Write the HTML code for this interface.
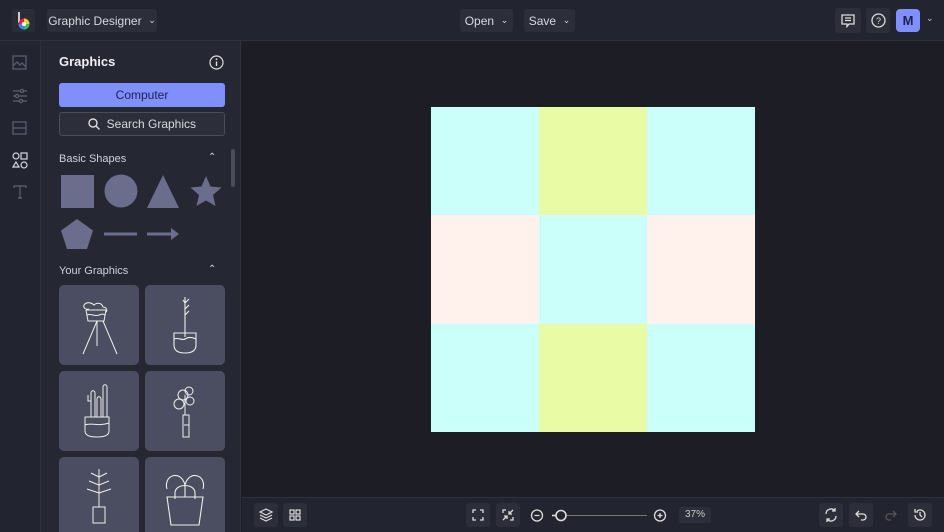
<!DOCTYPE html>
<html><head><meta charset="utf-8"><style>
*{margin:0;padding:0;box-sizing:border-box}
html,body{width:944px;height:532px;overflow:hidden}
body{background:#1c1d25;font-family:"Liberation Sans",sans-serif;position:relative;color:#e6e7ee}
.abs{position:absolute}
.top{left:0;top:0;width:944px;height:41px;background:#22242f;border-bottom:1px solid #2f313c}
.btn{position:absolute;background:#2c2e3a;border-radius:3px;color:#d8d9e0;font-size:12px;display:flex;align-items:center;justify-content:center;white-space:nowrap}
.rail{left:0;top:41px;width:41px;height:491px;background:#22242f;border-right:1px solid #2f313c}
.panel{left:41px;top:41px;width:200px;height:491px;background:#252733;border-right:1px solid #2f313c}
.bottom{left:242px;top:497px;width:702px;height:35px;background:#22242f;border-top:1px solid #2f313c}
.card{position:absolute;width:80px;height:80px;background:#4b4e60;border-radius:5px}
.sh{fill:#6b6d8c}
.ib{position:absolute;width:24px;height:24px;background:#2c2e3a;border-radius:3px}
</style></head><body>
<div class="abs top"></div>
<div class="btn" style="left:12px;top:9px;width:23px;height:23px;background:#2a2c37">
<svg width="18" height="20" viewBox="0 0 18 20"><line x1="4" y1="1" x2="4" y2="12" stroke="#fff" stroke-width="1.5"/><circle cx="9" cy="13" r="5.5" fill="#e24"/><path d="M9 13 L9 7.5 A5.5 5.5 0 0 1 14.5 13Z" fill="#fc3"/><path d="M9 13 L14.5 13 A5.5 5.5 0 0 1 9 18.5Z" fill="#3b6"/><path d="M9 13 L9 18.5 A5.5 5.5 0 0 1 3.5 13Z" fill="#38e"/><circle cx="9" cy="13" r="2" fill="#fff"/></svg></div>
<div class="btn" style="left:47px;top:9px;width:110px;height:23px">Graphic Designer&nbsp;&nbsp;<span style="font-size:9px">⌄</span></div>
<div class="btn" style="left:460px;top:9px;width:53px;height:23px">Open&nbsp;&nbsp;<span style="font-size:9px">⌄</span></div>
<div class="btn" style="left:524px;top:9px;width:51px;height:23px">Save&nbsp;&nbsp;<span style="font-size:9px">⌄</span></div>
<div class="btn" style="left:835px;top:8px;width:26px;height:25px"><svg width="14" height="14" viewBox="0 0 14 14" fill="none" stroke="#ddd" stroke-width="1.3"><path d="M1 1h12v9H8l-2 2.5V10H1z"/><path d="M4 4h6M4 6.5h6"/></svg></div>
<div class="btn" style="left:866px;top:8px;width:24px;height:25px"><svg width="15" height="15"><circle cx="7.5" cy="7.5" r="6.5" fill="none" stroke="#ddd" stroke-width="1.3"/><text x="7.5" y="11" font-size="9" fill="#ddd" text-anchor="middle" font-family="Liberation Sans">?</text></svg></div>
<div class="btn" style="left:896px;top:9px;width:24px;height:23px;background:#7f8ffb;color:#1d2150;font-weight:bold;font-size:13px;border-radius:4px">M</div>
<div class="abs" style="left:926px;top:13px;font-size:9px;color:#ccc">⌄</div>

<div class="abs rail"></div>
<svg class="abs" style="left:12px;top:55px" width="16" height="145" fill="none" stroke="#5f6175" stroke-width="1.2">
<rect x="1" y="1" width="13" height="13"/><path d="M1 11l4-4 3 3 2-2 4 4"/>
<path d="M1 36h14M1 41h14M1 46h14"/><circle cx="10" cy="36" r="1.6" fill="#22242f"/><circle cx="5" cy="41" r="1.6" fill="#22242f"/><circle cx="9" cy="46" r="1.6" fill="#22242f"/>
<rect x="1" y="67" width="13" height="12"/><path d="M1 73h13"/>
<g stroke="#d8d9e0"><circle cx="4" cy="101" r="3"/><rect x="9" y="98" width="6" height="6"/><path d="M4 107l3 5H1z"/><circle cx="12" cy="110" r="3"/></g>
<path d="M2 133v-2h12v2M8 131v12M6 143h4"/>
</svg>

<div class="abs panel"></div>
<div class="abs" style="left:59px;top:54px;font-size:13px;font-weight:bold;color:#f0f0f5">Graphics</div>
<svg class="abs" style="left:209px;top:55px" width="15" height="15"><circle cx="7.5" cy="7.5" r="6.5" fill="none" stroke="#ddd" stroke-width="1.2"/><path d="M7.5 6.5v4.5" stroke="#ddd" stroke-width="1.4"/><circle cx="7.5" cy="4.3" r=".9" fill="#ddd"/></svg>
<div class="btn" style="left:59px;top:83px;width:166px;height:24px;background:#7f8ffb;color:#1d2150;font-size:12px">Computer</div>
<div class="btn" style="left:59px;top:112px;width:166px;height:24px;background:#2c2e3a;border:1px solid #4a4c5a;font-size:12px"><svg width="12" height="12" fill="none" stroke="#ddd" stroke-width="1.4"><circle cx="5" cy="5" r="4"/><path d="M8 8l3.5 3.5"/></svg>&nbsp;&nbsp;Search Graphics</div>
<div class="abs" style="left:231px;top:149px;width:4px;height:38px;background:#4a4c5a;border-radius:2px"></div>
<div class="abs" style="left:59px;top:153px;font-size:11px;color:#d0d1da">Basic Shapes</div>
<div class="abs" style="left:208px;top:152px;font-size:10px;color:#ccc">⌃</div>
<svg class="abs" style="left:60px;top:174px" width="166" height="80">
<rect class="sh" x="1" y="1" width="33" height="33"/>
<circle class="sh" cx="61" cy="17" r="16.5"/>
<path class="sh" d="M103 1L119 34H87z"/>
<path class="sh" d="M146 2l4.5 10.5 11 1-8.5 7.5 2.5 11-9.5-5.5-9.5 5.5 2.5-11-8.5-7.5 11-1z"/>
<path class="sh" d="M17 45l16 11.5-6 18.5H7L1 56.5z"/>
<rect class="sh" x="44" y="58.5" width="33" height="3"/>
<rect class="sh" x="87" y="58.5" width="25" height="3"/><path class="sh" d="M111 54l8 6-8 6z"/>
</svg>
<div class="abs" style="left:59px;top:265px;font-size:11px;color:#d0d1da">Your Graphics</div>
<div class="abs" style="left:208px;top:264px;font-size:10px;color:#ccc">⌃</div>
<div class="card" style="left:59px;top:285px"><svg width="80" height="80" fill="none" stroke="#eee" stroke-width="1"><path d="M25 20c3-4 8-2 10 0 3-3 8-2 9 2 3 0 5 3 3 5M25 20c-1 3 2 5 5 4M27 25h20M27 25l2 11h16l2-11M28 30c4-2 8 2 12 0s6 0 6 0M38 36l-14 33M38 36v25M44 36l14 33"/></svg></div>
<div class="card" style="left:145px;top:285px"><svg width="80" height="80" fill="none" stroke="#eee" stroke-width="1.1"><path d="M40 12v40M40 18l4-4M40 24l4-4M40 30l4-4M40 18l-2-3M29 48h22v12c0 6-5 8-11 8s-11-2-11-8zM29 54c5-2 8 2 11 0s7-2 11 0"/></svg></div>
<div class="card" style="left:59px;top:371px"><svg width="80" height="80" fill="none" stroke="#eee" stroke-width="1"><path d="M32 46V22c0-3 4-3 4 0v24M38 46V28c0-3 4-3 4 0v18M44 46V16c0-3 4-3 4 0v30M32 30h-3v-6M26 46h24v14c0 4-4 6-12 6s-12-2-12-6zM26 54c6-3 12 2 24-2"/></svg></div>
<div class="card" style="left:145px;top:371px"><svg width="80" height="80" fill="none" stroke="#eee" stroke-width="1"><circle cx="38" cy="24" r="5"/><circle cx="44" cy="20" r="4"/><circle cx="34" cy="33" r="5"/><circle cx="45" cy="30" r="4"/><path d="M40 24v20M38 44h6v22h-6zM39 54h5"/></svg></div>
<div class="card" style="left:59px;top:457px"><svg width="80" height="80" fill="none" stroke="#eee" stroke-width="1"><path d="M40 12v38M40 20l-8-4M40 20l8-4M40 28l-10-4M40 28l10-4M40 36l-12-4M40 36l12-4M34 50h12v16H34z"/></svg></div>
<div class="card" style="left:145px;top:457px"><svg width="80" height="80" fill="none" stroke="#eee" stroke-width="1.1"><path d="M22 32c-4-14 14-20 18-4M58 32c4-14-14-20-18-4M30 36c0-10 20-10 20 0M22 40h36l-4 28H26zM40 28v12M30 36v6M50 36v6"/></svg></div>

<div class="abs" style="left:431px;top:107px;width:324px;height:325px;display:grid;grid-template-columns:108px 108px 108px;grid-template-rows:108px 109px 108px">
<div style="background:#cbfff9"></div><div style="background:#e9fba4"></div><div style="background:#cbfff9"></div>
<div style="background:#fff1ec"></div><div style="background:#cbfff9"></div><div style="background:#fff1ec"></div>
<div style="background:#cbfff9"></div><div style="background:#e9fba4"></div><div style="background:#cbfff9"></div>
</div>

<div class="abs bottom"></div>
<div class="ib" style="left:254px;top:503px"><svg width="24" height="24" fill="none" stroke="#ddd" stroke-width="1.2"><path d="M12 6l6 3-6 3-6-3zM6 12l6 3 6-3M6 15l6 3 6-3"/></svg></div>
<div class="ib" style="left:283px;top:503px"><svg width="24" height="24" fill="none" stroke="#ddd" stroke-width="1.2"><rect x="7" y="7" width="4" height="4"/><rect x="13" y="7" width="4" height="4"/><rect x="7" y="13" width="4" height="4"/><rect x="13" y="13" width="4" height="4"/></svg></div>
<div class="ib" style="left:466px;top:503px"><svg width="24" height="24" fill="none" stroke="#ddd" stroke-width="1.3"><path d="M7 10V7h3M14 7h3v3M17 14v3h-3M10 17H7v-3"/></svg></div>
<div class="ib" style="left:496px;top:503px"><svg width="24" height="24" fill="none" stroke="#ddd" stroke-width="1.3"><path d="M7 10V7h3M17 7l-4 4M13 8v3h3M17 14v3h-3M7 17l4-4M8 13h3v3"/></svg></div>
<svg class="abs" style="left:530px;top:508px" width="140" height="16" fill="none" stroke="#ddd" stroke-width="1.3"><circle cx="7" cy="7.5" r="5.5"/><path d="M4.5 7.5h5"/><path d="M36 7.5h81" stroke="#777" stroke-width="1"/><circle cx="31" cy="7.5" r="5" fill="#22242f" stroke-width="1.6"/><path d="M22 7.5h4" stroke-width="1.6"/><circle cx="130" cy="7.5" r="5.5"/><path d="M127.5 7.5h5M130 5v5"/></svg>
<div class="abs" style="left:679px;top:507px;width:32px;height:16px;background:#2c2e3a;border-radius:2px;font-size:10px;color:#ccc;text-align:center;line-height:16px">37%</div>
<div class="ib" style="left:819px;top:503px"><svg width="24" height="24" fill="none" stroke="#ddd" stroke-width="1.3"><path d="M7 11a5 5 0 0 1 9-3M17 13a5 5 0 0 1-9 3M16 5v3h-3M8 19v-3h3"/></svg></div>
<div class="ib" style="left:849px;top:503px"><svg width="24" height="24" fill="none" stroke="#ddd" stroke-width="1.3"><path d="M10 8l-3 3 3 3M7 11h7a3 3 0 0 1 0 6h-2"/></svg></div>
<svg class="abs" style="left:879px;top:503px" width="24" height="24" fill="none" stroke="#555" stroke-width="1.3"><path d="M14 8l3 3-3 3M17 11h-7a3 3 0 0 0 0 6h2"/></svg>
<div class="ib" style="left:908px;top:503px"><svg width="24" height="24" fill="none" stroke="#ddd" stroke-width="1.3"><path d="M7 12a5 5 0 1 0 2-4M7 6v3h3M12 9v3l2 2"/></svg></div>
</body></html>
